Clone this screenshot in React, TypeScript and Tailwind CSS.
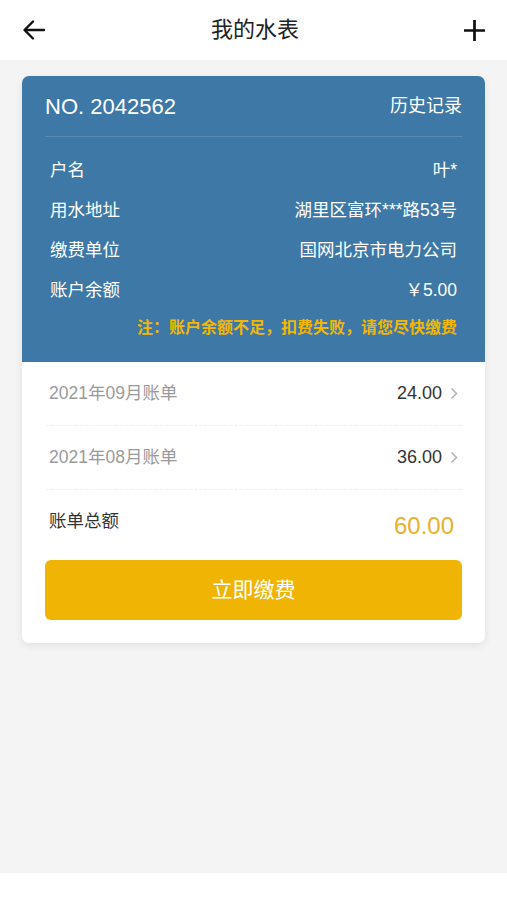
import React from 'react';

const bills = [
    { month: '2021年09月账单', amount: '24.00' },
    { month: '2021年08月账单', amount: '36.00' },
];

const info = [
    { label: '户名', value: '叶*' },
    { label: '用水地址', value: '湖里区富环***路53号' },
    { label: '缴费单位', value: '国网北京市电力公司' },
    { label: '账户余额', value: '￥5.00' },
];

export default function App() {
    return (
        <div
            className="w-[507px] h-[900px] bg-white flex flex-col"
            style={{ fontFamily: '"Liberation Sans", "Noto Sans CJK SC", sans-serif' }}
        >
            {/* header */}
            <div className="h-[60px] shrink-0 bg-white flex items-center justify-between px-[22px]">
                <svg width="24" height="24" viewBox="0 0 24 24" fill="none" stroke="#111" strokeWidth="2.4" strokeLinecap="round" strokeLinejoin="round">
                    <path d="M22 12H3M11 3.5 2.5 12l8.5 8.5" />
                </svg>
                <span className="text-[22px] text-[#222] leading-none">我的水表</span>
                <svg width="21" height="21" viewBox="0 0 20 20" fill="none" stroke="#111" strokeWidth="2.6">
                    <path d="M10 0v20M0 10h20" />
                </svg>
            </div>

            <div className="h-[813px] shrink-0 bg-[#f4f4f4] pt-[16px] px-[22px]">
                <div className="bg-white rounded-[7px] shadow-[0_3px_8px_rgba(0,0,0,0.08)] overflow-hidden">
                    {/* blue meter block */}
                    <div className="bg-[#3e78a6] text-white px-[23px] pb-[22px]">
                        <div className="h-[61px] flex items-center justify-between border-b border-[#5a8db6]">
                            <span className="text-[22px]">NO. 2042562</span>
                            <span className="text-[18px]">历史记录</span>
                        </div>
                        <div className="px-[5px] pt-[13px]">
                            {info.map((row) => (
                                <div key={row.label} className="h-[40px] flex items-center justify-between text-[17.5px]">
                                    <span>{row.label}</span>
                                    <span>{row.value}</span>
                                </div>
                            ))}
                            <div className="text-right text-[16px] font-semibold text-[#f2b705] mt-[6px]">
                                注：账户余额不足，扣费失败，请您尽快缴费
                            </div>
                        </div>
                    </div>

                    {/* bills */}
                    <div className="px-[23px]">
                        {bills.map((b) => (
                            <div key={b.month} className="h-[64px] flex items-center justify-between border-b border-dashed border-[#eeeeee] pl-[4px] pr-[4px]">
                                <span className="text-[17.5px] text-[#9a9a9a]">{b.month}</span>
                                <span className="flex items-center gap-[8px]">
                                    <span className="text-[18px] text-[#333]">{b.amount}</span>
                                    <svg width="8" height="13" viewBox="0 0 8 13" fill="none" stroke="#b5b5b5" strokeWidth="1.6">
                                        <path d="M1.5 1.5 6.5 6.5 1.5 11.5" />
                                    </svg>
                                </span>
                            </div>
                        ))}
                        <div className="h-[70px] flex justify-between pl-[4px] pr-[8px] pt-[18px]">
                            <span className="text-[17.5px] text-[#333]">账单总额</span>
                            <span className="text-[24px] text-[#e8b030] leading-none mt-[6px]">60.00</span>
                        </div>
                        <button className="w-full h-[60px] rounded-[6px] bg-[#f0b404] text-white text-[21px] flex items-center justify-center">
                            立即缴费
                        </button>
                        <div className="h-[23px]" />
                    </div>
                </div>
            </div>
        </div>
    );
}
